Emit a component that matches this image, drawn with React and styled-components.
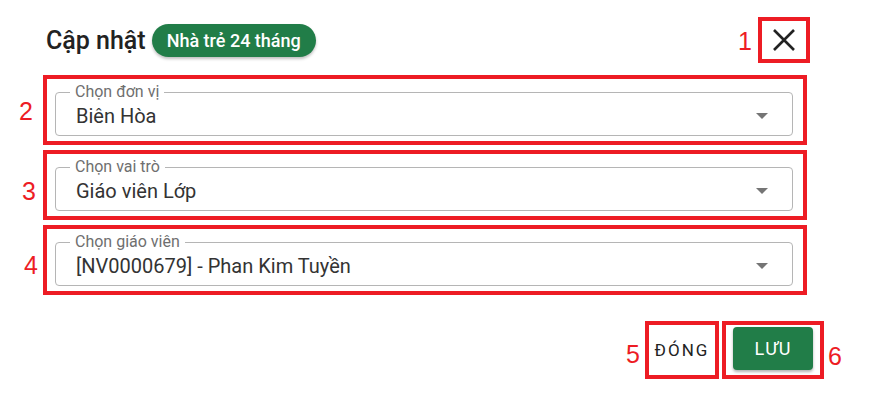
import React from 'react';
import styled, { createGlobalStyle } from 'styled-components';

const GlobalStyle = createGlobalStyle`
  body {
    margin: 0;
    background: #fff;
    font-family: Roboto, "Noto Sans", Arial, sans-serif;
  }
`;

const RED = '#ed1c24';
const GREEN = '#217d48';

const Page = styled.div`
  width: 781px;
  padding: 17px 0 0 43px;
  display: flex;
  flex-direction: column;
`;

const Header = styled.div`
  display: flex;
  align-items: center;
  padding-right: 14px;
`;

const Title = styled.h2`
  margin: 0 6px 0 3px;
  font-size: 25px;
  font-weight: 500;
  color: #222;
`;

const Chip = styled.span`
  display: inline-flex;
  align-items: center;
  height: 33px;
  padding: 0 15px;
  border-radius: 17px;
  background: ${GREEN};
  color: #fff;
  font-size: 18px;
  font-weight: 500;
  box-shadow: 0 2px 3px rgba(0, 0, 0, 0.25);
`;

const Spacer = styled.div`
  flex: 1;
`;

// red annotation frame
const Mark = styled.div`
  position: relative;
  border: 4px solid ${RED};
  padding: ${(p) => p.$pad || '0'};
  display: flex;
`;

const Num = styled.span`
  position: absolute;
  top: 50%;
  ${(p) => (p.$side === 'right' ? 'left' : 'right')}: calc(100% + ${(p) => p.$gap}px);
  transform: translateY(calc(-50% + ${(p) => p.$dy || 0}px));
  font-family: "Liberation Sans", Arial, sans-serif;
  font-size: 25px;
  line-height: 1;
  color: ${RED};
`;

const CloseButton = styled.button`
  border: none;
  background: none;
  padding: 0;
  width: 22px;
  height: 22px;
  cursor: pointer;
  display: flex;
`;

const Fields = styled.div`
  display: flex;
  flex-direction: column;
  gap: 5px;
  margin-top: 12px;
  padding-right: 17px;
`;

const Fieldset = styled.fieldset`
  flex: 1;
  margin: 0;
  padding: 0 24px 0 20px;
  border: 1px solid #b5b5b5;
  border-radius: 4px;
  min-width: 0;
`;

const Legend = styled.legend`
  margin-left: -6px;
  padding: 0 5px;
  font-size: 16px;
  line-height: 16px;
  color: #6f6f6f;
`;

const SelectRow = styled.div`
  height: 35px;
  padding-bottom: 4px;
  box-sizing: border-box;
  display: flex;
  align-items: center;
`;

const Value = styled.span`
  flex: 1;
  font-size: 20px;
  color: #333;
`;

const Caret = styled.span`
  width: 0;
  height: 0;
  border-left: 6px solid transparent;
  border-right: 6px solid transparent;
  border-top: 6px solid #757575;
  margin-top: 1px;
`;

const Footer = styled.div`
  display: flex;
  justify-content: flex-end;
  gap: 3px;
  margin-top: 26px;
`;

const TextButton = styled.button`
  border: none;
  background: none;
  width: 66px;
  height: 50px;
  padding: 0;
  font-family: Roboto, sans-serif;
  font-size: 17px;
  letter-spacing: 2px;
  color: #222;
  cursor: pointer;
`;

const PrimaryButton = styled.button`
  border: none;
  width: 80px;
  height: 43px;
  border-radius: 4px;
  background: ${GREEN};
  color: #fff;
  font-family: Roboto, sans-serif;
  font-size: 18px;
  letter-spacing: 1px;
  box-shadow: 0 2px 3px rgba(0, 0, 0, 0.3);
  cursor: pointer;
`;

const SelectField = ({ label, value }) => (
  <Fieldset>
    <Legend>{label}</Legend>
    <SelectRow>
      <Value>{value}</Value>
      <Caret />
    </SelectRow>
  </Fieldset>
);

const fields = [
  { n: 2, label: 'Chọn đơn vị', value: 'Biên Hòa', gap: 14, dy: 1 },
  { n: 3, label: 'Chọn vai trò', value: 'Giáo viên Lớp', gap: 11, dy: 6 },
  { n: 4, label: 'Chọn giáo viên', value: '[NV0000679] - Phan Kim Tuyền', gap: 9, dy: 5 },
];

export default function App() {
  return (
    <Page>
      <GlobalStyle />
      <Header>
        <Title>Cập nhật</Title>
        <Chip>Nhà trẻ 24 tháng</Chip>
        <Spacer />
        <Mark $pad="8px 11px">
          <Num $gap={10} $dy={1}>1</Num>
          <CloseButton aria-label="Đóng">
            <svg width="22" height="22" viewBox="0 0 22 22">
              <path d="M1 1 21 21M21 1 1 21" stroke="#222" strokeWidth="2.6" fill="none" />
            </svg>
          </CloseButton>
        </Mark>
      </Header>

      <Fields>
        {fields.map((f) => (
          <Mark key={f.n} $pad="5px 10px 5px 8px">
            <Num $gap={f.gap} $dy={f.dy}>{f.n}</Num>
            <SelectField label={f.label} value={f.value} />
          </Mark>
        ))}
      </Fields>

      <Footer>
        <Mark>
          <Num $gap={9} $dy={4}>5</Num>
          <TextButton>ĐÓNG</TextButton>
        </Mark>
        <Mark $pad="2px 7px 5px 7px">
          <Num $side="right" $gap={8} $dy={6}>6</Num>
          <PrimaryButton>LƯU</PrimaryButton>
        </Mark>
      </Footer>
    </Page>
  );
}
